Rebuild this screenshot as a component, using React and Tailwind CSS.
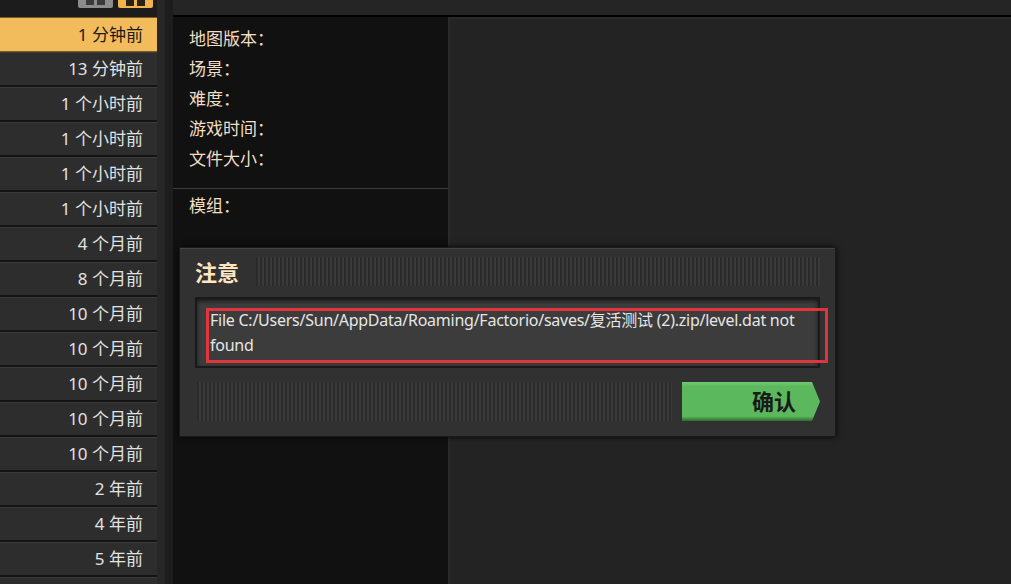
import React from 'react';

const times = [
  '1 分钟前', '13 分钟前', '1 个小时前', '1 个小时前', '1 个小时前', '1 个小时前',
  '4 个月前', '8 个月前', '10 个月前', '10 个月前', '10 个月前', '10 个月前', '10 个月前',
  '2 年前', '4 年前', '5 年前', '',
];

const labels = ['地图版本：', '场景：', '难度：', '游戏时间：', '文件大小：'];

const font = { fontFamily: '"Noto Sans", "Noto Sans CJK SC", sans-serif' };

const stripes =
  'bg-[repeating-linear-gradient(90deg,#2a2a2a_0px,#2a2a2a_2px,#3a3a3a_2px,#3a3a3a_4px)]';

const App = () => {
  return (
    <div className="relative flex h-[584px] w-[1011px] overflow-hidden bg-[#232323]" style={font}>
      {/* Save list */}
      <div className="flex w-[157px] flex-col bg-[#1c1c1c]">
        <div className="flex h-[17px] shrink-0 items-start gap-[5px] pl-[78px]">
          <div className="flex h-[8px] w-[35px] justify-center gap-[3px] rounded-b-[2px] bg-[#8c8c8c]">
            <span className="h-[5px] w-[8px] bg-[#3a3a3a]" />
            <span className="h-[5px] w-[8px] bg-[#3a3a3a]" />
          </div>
          <div className="flex h-[8px] w-[35px] justify-center gap-[3px] rounded-b-[2px] bg-[#f0b24f]">
            <span className="h-[6px] w-[8px] bg-[#2a2114]" />
            <span className="h-[6px] w-[8px] bg-[#2a2114]" />
          </div>
        </div>
        {times.map((t, i) => (
          <div
            key={i}
            className={
              i === 0
                ? 'flex h-[35px] shrink-0 items-center justify-end border-y border-[#7a5a25] bg-[#f2bb5c] pr-[14px] text-[17px] text-[#1b1b1b]'
                : 'flex h-[35px] shrink-0 items-center justify-end border-t border-[#3a3a3a] border-b-2 border-b-[#141414] bg-[#2d2d2d] pr-[14px] text-[17px] text-[#e2e2e2]'
            }
          >
            {t}
          </div>
        ))}
      </div>

      {/* scrollbar gutter */}
      <div className="flex w-[16px]">
        <div className="w-[8px] bg-[#272727]" />
        <div className="w-[8px] bg-[#1d1d1d]" />
      </div>

      {/* right side */}
      <div className="flex flex-1 flex-col">
        <div className="h-[17px] shrink-0 border-b-2 border-black bg-[#252525]" />
        <div className="flex flex-1">
          <div className="flex w-[275px] flex-col bg-[#111111] text-[17px] text-[#f1dfc3]">
            <div className="flex flex-col pt-[7px] pb-[14px] pl-[16px]">
              {labels.map((l) => (
                <div key={l} className="h-[30px] leading-[30px]">{l}</div>
              ))}
            </div>
            <div className="h-px bg-[#3c3c3c]" />
            <div className="h-[30px] pt-[2px] pl-[16px] leading-[30px]">模组：</div>
          </div>
          <div className="flex-1 border-t-2 border-l-2 border-[#2a2a2a] bg-[#232323]" />
        </div>
      </div>

      {/* Notice dialog */}
      <div className="absolute left-[179px] top-[247px] flex h-[190px] w-[657px] flex-col border border-[#1a1a1a] bg-[#313131] px-[15px] pt-[9px] shadow-[0_0_6px_rgba(0,0,0,0.8),inset_0_1px_0_#444]">
        <div className="flex h-[29px] items-center gap-[17px]">
          <span className="text-[22px] font-bold leading-none text-[#ffe5c0]">注意</span>
          <div className={`h-[29px] flex-1 ${stripes}`} />
        </div>
        <div className="relative mt-[11px] h-[71px] border-2 border-[#1a1a1a] bg-[#3c3c3c] pl-[13px] pr-[6px] pt-[9px] text-[16px] leading-[25px] tracking-[-0.25px] text-[#e6e6e6] shadow-[inset_0_2px_4px_rgba(0,0,0,0.6)]">
          File C:/Users/Sun/AppData/Roaming/Factorio/saves/复活测试 (2).zip/level.dat not found
          <div className="absolute left-[9px] top-[9px] h-[55px] w-[622px] border-[3px] border-[#e2343c]" />
        </div>
        <div className="mt-[14px] flex h-[39px] items-stretch gap-[10px]">
          <div className={`ml-[2px] flex-1 ${stripes}`} />
          <div className="flex w-[138px] items-center justify-end bg-[linear-gradient(#74c874,#5cb85c_12%,#5cb85c_88%,#2d6a31)] pr-[24px] text-[22px] font-bold text-[#1a1a1a] [clip-path:polygon(0_0,calc(100%-8px)_0,100%_50%,calc(100%-8px)_100%,0_100%)]">
            确认
          </div>
        </div>
      </div>
    </div>
  );
};

export default App;
